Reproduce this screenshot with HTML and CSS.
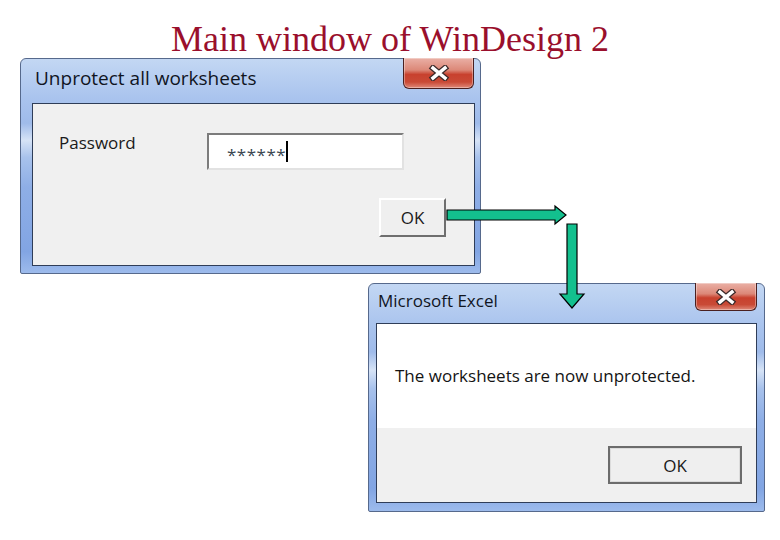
FILE: index.html
```html
<!DOCTYPE html>
<html lang="en">
<head>
    <meta charset="UTF-8">
    <title>Main window of WinDesign 2</title>
    <link rel="stylesheet" href="styles.css">
</head>
<body>
    <h1 class="caption">Main window of WinDesign 2</h1>

    <div class="window win-unprotect">
        <div class="titlebar">
            <span class="title">Unprotect all worksheets</span>
            <div class="close">
                <svg width="22" height="16" viewBox="0 0 22 16">
                    <path d="M5 3 L17 13 M17 3 L5 13" stroke="#3c2a2a" stroke-width="6" stroke-linecap="square"/>
                    <path d="M5 3 L17 13 M17 3 L5 13" stroke="#ffffff" stroke-width="3.5" stroke-linecap="square"/>
                </svg>
            </div>
        </div>
        <div class="client">
            <div class="field-row">
                <span class="label">Password</span>
                <div class="field"><span class="stars">******</span><span class="caret"></span></div>
            </div>
            <div class="actions">
                <button class="btn">OK</button>
            </div>
        </div>
    </div>

    <div class="window win-excel">
        <div class="titlebar">
            <span class="title">Microsoft Excel</span>
            <div class="close">
                <svg width="22" height="16" viewBox="0 0 22 16">
                    <path d="M5 3 L17 13 M17 3 L5 13" stroke="#3c2a2a" stroke-width="6" stroke-linecap="square"/>
                    <path d="M5 3 L17 13 M17 3 L5 13" stroke="#ffffff" stroke-width="3.5" stroke-linecap="square"/>
                </svg>
            </div>
        </div>
        <div class="client">
            <div class="message">The worksheets are now unprotected.</div>
            <div class="buttons">
                <button class="btn btn-default">OK</button>
            </div>
        </div>
    </div>

    <svg class="arrows" width="780" height="540" viewBox="0 0 780 540">
        <polygon points="447,210 555,210 555,206 566,215 555,224 555,220 447,220" fill="#13c08e" stroke="#000" stroke-width="1.2"/>
        <polygon points="567,224 577,224 577,294 584,294 572,308 560,294 567,294" fill="#13c08e" stroke="#000" stroke-width="1.2"/>
    </svg>
</body>
</html>
```

FILE: styles.css
```css
body {
    margin: 0;
    width: 780px;
    height: 540px;
    position: relative;
    overflow: hidden;
    background-color: #ffffff;
    font-family: "Open Sans", "Noto Sans", sans-serif;
}
.caption {
    margin: 19px 0 0 0;
    font-family: "Liberation Serif", "Times New Roman", serif;
    font-weight: normal;
    font-size: 36px;
    line-height: 40px;
    color: #9a0f2c;
    text-align: center;
}

/* windows sit on the page like on a desktop */
.window {
    position: absolute;
    display: flex;
    flex-direction: column;
    box-sizing: border-box;
    border: 1px solid #56698c;
    border-radius: 6px 6px 2px 2px;
    background: linear-gradient(to bottom, #c3d7f3 0%, #aac4ee 18%, #9fbbea 30%, #d6e3f6 38%, #a8c2ec 46%, #8eaee6 60%, #82a5e3 90%, #9dbbec 100%);
}
.win-unprotect {
    left: 20px;
    top: 58px;
    width: 461px;
    height: 216px;
    padding: 0 5px 7px 11px;
}
.win-excel {
    left: 368px;
    top: 283px;
    width: 397px;
    height: 229px;
    padding: 0 7px 8px 7px;
}
.titlebar {
    display: flex;
    justify-content: space-between;
    align-items: flex-start;
    flex: none;
}
.win-unprotect .titlebar {
    height: 44px;
}
.win-excel .titlebar {
    height: 39px;
}
.title {
    color: #10151f;
}
.win-unprotect .title {
    font-size: 19px;
    margin: 6px 0 0 3px;
}
.win-excel .title {
    font-size: 17px;
    margin: 5px 0 0 2px;
}
.close {
    display: flex;
    align-items: center;
    justify-content: center;
    box-sizing: border-box;
    margin-top: -1px;
    border: 1px solid #4a2020;
    border-top: none;
    border-radius: 0 0 6px 6px;
    background: linear-gradient(to bottom, #eab0a6 0%, #dc8878 40%, #c8412e 55%, #c94a36 80%, #df8a7a 100%);
    box-shadow: inset 0 0 0 1px rgba(255, 255, 255, 0.35);
}
.win-unprotect .close {
    width: 71px;
    height: 31px;
    margin-right: 1px;
}
.win-excel .close {
    width: 62px;
    height: 28px;
}
.client {
    flex: 1;
    box-sizing: border-box;
    border: 1px solid #2f3d58;
    background-color: #f0f0f0;
}

/* unprotect dialog */
.win-unprotect .client {
    padding: 29px 28px 0 26px;
}
.field-row {
    display: flex;
    align-items: flex-start;
}
.label {
    width: 148px;
    font-size: 17px;
    line-height: 23px;
    margin-top: -2px;
    color: #1a1a1a;
}
.field {
    display: flex;
    align-items: center;
    box-sizing: border-box;
    width: 197px;
    height: 37px;
    padding-left: 18px;
    background-color: #ffffff;
    border-style: solid;
    border-width: 2px;
    border-color: #7c7c7c #e2e2e2 #e2e2e2 #7c7c7c;
}
.stars {
    font-size: 17px;
    line-height: 21px;
    letter-spacing: 0.5px;
    color: #3a4650;
    margin-top: 6px;
}
.caret {
    display: inline-block;
    width: 2px;
    height: 21px;
    background-color: #000000;
}
.actions {
    display: flex;
    justify-content: flex-end;
    margin-top: 28px;
}
.btn {
    box-sizing: border-box;
    width: 67px;
    height: 39px;
    padding: 0;
    font-family: "Open Sans", "Noto Sans", sans-serif;
    font-size: 17px;
    color: #1a1a1a;
    background-color: #efefef;
    border-style: solid;
    border-width: 2px;
    border-color: #ffffff #6e6e6e #6e6e6e #ffffff;
}

/* excel message box */
.message {
    height: 104px;
    box-sizing: border-box;
    padding: 40px 0 0 18px;
    background-color: #ffffff;
    font-size: 17px;
    line-height: 23px;
    color: #141414;
}
.buttons {
    display: flex;
    justify-content: flex-end;
    padding: 18px 14px 0 0;
}
.btn-default {
    width: 134px;
    height: 38px;
    border: 2px solid #6c6c6c;
    box-shadow: inset 0 0 0 1px #dcdcdc;
}

.arrows {
    position: absolute;
    left: 0;
    top: 0;
    pointer-events: none;
}
```
